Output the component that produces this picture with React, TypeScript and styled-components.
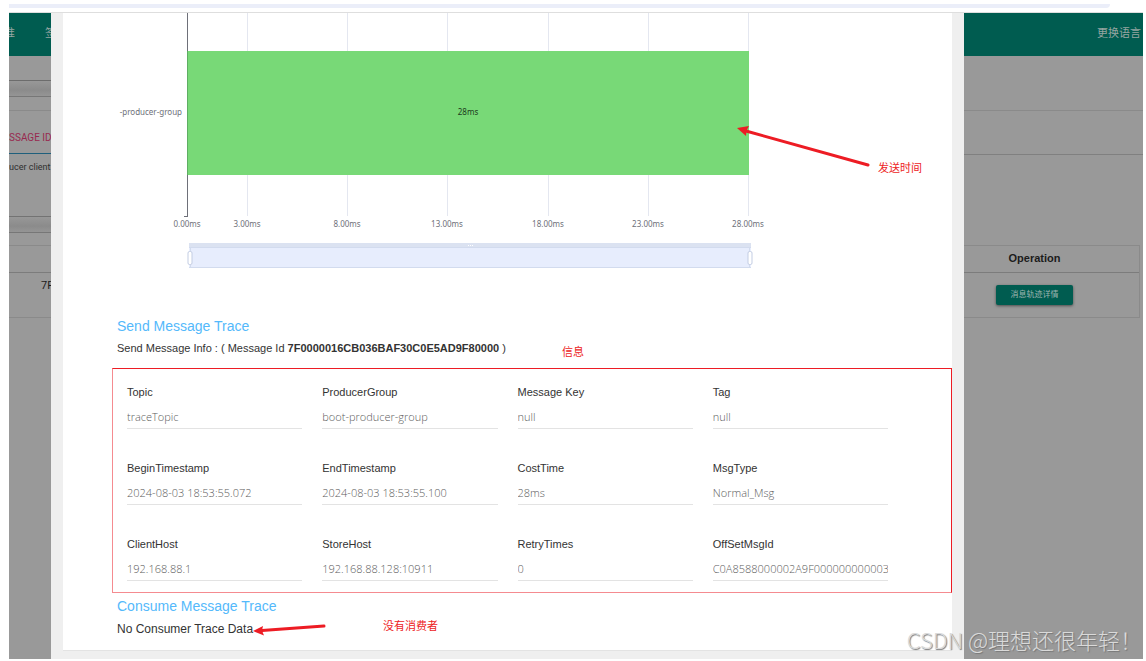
import React from 'react';
import styled, { createGlobalStyle } from 'styled-components';

const sans = '"Liberation Sans", "Noto Sans CJK SC", sans-serif';
const humanist = '"Open Sans", "Noto Sans CJK SC", sans-serif';
const material = 'Roboto, "Noto Sans CJK SC", sans-serif';
const red = '#ed1c24';

const GlobalStyle = createGlobalStyle`
  * { box-sizing: border-box; }
  body { margin: 0; background: #fff; font-family: ${sans}; color: #333; }
  h2, p { margin: 0; }
`;

const Page = styled.div`
  position: relative;
  padding: 4px 3px 2px 9px;
  overflow: hidden;
`;

const AddressBar = styled.div`
  height: 4px;
  margin-right: 33px;
  background: #ebeef9;
  border-bottom-right-radius: 4px;
`;

const Window = styled.div`
  display: grid;
  grid-template-columns: 42px minmax(0, 1fr) 179px;
  margin-top: 4px;
  border-top: 1px solid #dedede;
`;

const Backdrop = styled.div`
  background: #999;
  overflow: hidden;
  white-space: nowrap;
  font-family: ${material};
  font-size: 10px;
  color: #2f2f2f;
`;

const Header = styled.header<{ $end?: boolean }>`
  display: flex;
  align-items: center;
  justify-content: ${(p) => (p.$end ? 'flex-end' : 'space-between')};
  height: 43px;
  padding-right: ${(p) => (p.$end ? '2px' : '0')};
  padding-bottom: 2px;
  background: #005c50;
  color: #95a5a1;
  font-size: 11px;
  line-height: 16px;
`;

const HeaderClip = styled.span<{ $width: number; $fromEnd?: boolean }>`
  display: flex;
  justify-content: ${(p) => (p.$fromEnd ? 'flex-end' : 'flex-start')};
  width: ${(p) => p.$width}px;
  overflow: hidden;
`;

const Space = styled.div<{ $height: number; $line?: string }>`
  height: ${(p) => p.$height}px;
  border-bottom: 1px solid ${(p) => p.$line ?? 'transparent'};
`;

const ShadowBand = styled.div`
  height: 16px;
  border-bottom: 1px solid #777;
  background: linear-gradient(#989898, #8b8b8b 60%, #959595);
`;

const Tab = styled.div`
  display: flex;
  align-items: center;
  height: 43px;
  padding-top: 12px;
  border-bottom: 1px solid #1f5f7c;
  color: #98294f;
  line-height: 16px;
`;

const Hint = styled.div`
  height: 63px;
  padding-top: 5px;
  border-bottom: 1px solid #737373;
  font-size: 9px;
  line-height: 16px;
`;

const IdCell = styled.div`
  height: 45px;
  padding: 5px 0 0 32px;
  border-bottom: 1px solid #8a8a8a;
  font-size: 11px;
  line-height: 16px;
  color: #1c1c1c;
`;

const ResultTable = styled.table`
  width: calc(100% - 3px);
  border-collapse: separate;
  border-spacing: 0;
  border: 1px solid #8a8a8a;
  border-left: 0;
  text-align: center;

  th, td { padding: 0 34px 0 0; }
  th {
    height: 27px;
    padding-bottom: 2px;
    border-bottom: 1px solid #7c7c7c;
    font-family: ${sans};
    font-size: 11px;
    color: #1c1c1c;
  }
  td { height: 44px; }
`;

const DetailButton = styled.button`
  display: block;
  width: 77px;
  height: 20px;
  margin: 0 auto;
  padding: 0;
  border: 0;
  border-radius: 2px;
  background: #005c50;
  box-shadow: 0 1px 3px rgba(0, 0, 0, 0.5);
  color: #9fb5b1;
  font-family: ${sans};
  font-size: 8px;
  line-height: 20px;
`;

const Modal = styled.main`
  padding: 0 12px 8px;
  background: #efefef;
`;

const Panel = styled.section`
  position: relative;
  padding-bottom: 11px;
  background: #fff;
  border-bottom: 1px solid #e3e3e3;
`;

const Chart = styled.svg`
  display: block;
  width: 100%;
  height: 303px;
  font-family: "Noto Sans", sans-serif;
  font-size: 8px;
`;

const Title = styled.h2`
  padding-left: 54px;
  color: #54b9fb;
  font-size: 14px;
  font-weight: 400;
  line-height: 20px;
`;

const Info = styled.p`
  padding: 2px 0 0 54px;
  font-size: 11px;
  line-height: 20px;
`;

const Empty = styled.p`
  padding: 3px 0 0 54px;
  font-size: 12px;
  line-height: 20px;
`;

const FieldBox = styled.form`
  display: grid;
  grid-template-columns: repeat(4, minmax(0, 1fr));
  gap: 29px 20px;
  margin: 10px 0 3px 49px;
  padding: 13px 63px 11px 14px;
  border: 1px solid ${red};
  border-left-color: #f58b90;
  border-bottom-color: #f58b90;
`;

const Field = styled.div`
  display: flex;
  flex-direction: column;
`;

const Label = styled.label`
  font-size: 11px;
  line-height: 20px;
`;

const Value = styled.input`
  width: 100%;
  height: 27px;
  padding: 3px 0 0;
  border: 0;
  border-bottom: 1px solid #e3e3e3;
  border-radius: 0;
  outline: 0;
  background: transparent;
  color: #5c5c5c;
  font-family: ${humanist};
  font-size: 11px;
  font-weight: 300;
`;

const Marks = styled.svg`
  position: absolute;
  inset: 0;
  width: 100%;
  height: 100%;
  pointer-events: none;
  font-family: ${sans};
  font-size: 11px;
`;

const Watermark = styled.div`
  position: absolute;
  right: 4px;
  bottom: 6px;
  color: #dadada;
  font-family: "Noto Sans CJK SC", sans-serif;
  font-size: 22px;
  font-weight: 300;
  line-height: 32px;
  text-shadow: 1px 1px 1px #777;
  white-space: nowrap;
`;

const ticks: [number, string][] = [
  [124, '0.00ms'],
  [184, '3.00ms'],
  [284, '8.00ms'],
  [384, '13.00ms'],
  [485, '18.00ms'],
  [585, '23.00ms'],
  [685, '28.00ms'],
];

const fields: [string, string, string][] = [
  ['topic', 'Topic', 'traceTopic'],
  ['group', 'ProducerGroup', 'boot-producer-group'],
  ['key', 'Message Key', 'null'],
  ['tag', 'Tag', 'null'],
  ['begin', 'BeginTimestamp', '2024-08-03 18:53:55.072'],
  ['end', 'EndTimestamp', '2024-08-03 18:53:55.100'],
  ['cost', 'CostTime', '28ms'],
  ['type', 'MsgType', 'Normal_Msg'],
  ['client', 'ClientHost', '192.168.88.1'],
  ['store', 'StoreHost', '192.168.88.128:10911'],
  ['retry', 'RetryTimes', '0'],
  ['offset', 'OffSetMsgId', 'C0A8588000002A9F0000000000031B2C'],
];

function TraceChart() {
  return (
    <Chart role="img" aria-label="Message trace timeline">
      {ticks.slice(1).map(([x]) => (
        <rect key={x} x={x} y={0} width={1} height={203} fill="#e4e7f0" />
      ))}
      <rect x={124} y={0} width={1} height={204} fill="#6e7079" />
      <rect x={121} y={203} width={4} height={1} fill="#6e7079" />
      <rect x={125} y={38} width={561} height={124} fill="#78d977" />
      <rect x={124} y={38} width={1} height={124} fill="#5fae63" />
      <text x={119} y={102} textAnchor="end" fill="#6e7079">-producer-group</text>
      <text x={405} y={102} textAnchor="middle" fill="#1c3b1c">28ms</text>
      {ticks.map(([x, text]) => (
        <text key={text} x={x} y={214} textAnchor="middle" fill="#6e7079">{text}</text>
      ))}
      <rect x={126} y={230} width={562} height={5} fill="#dbe2f1" />
      <rect x={126} y={234} width={562} height={21} fill="#e7edfd" />
      <path d="M126 234.5H688M126 254.5H688M127.500 234V255M686.500 234V255" stroke="#d2dbee" fill="none" />
      <path d="M405 232.500h1m1 0h1m1 0h1" stroke="#fff" fill="none" />
      <rect x={125} y={238.5} width={4} height={13} rx={1.5} fill="#fff" stroke="#c3cde3" />
      <rect x={685} y={238.5} width={4} height={13} rx={1.5} fill="#fff" stroke="#c3cde3" />
    </Chart>
  );
}

function Annotations() {
  return (
    <Marks aria-hidden="true">
      <g stroke={red} fill="none" strokeLinecap="round">
        <path d="M683 118L805 152" strokeWidth={3} />
        <path d="M199 617.500L261 613" strokeWidth={3} />
      </g>
      <path d="M674 115L686 113L683.500 117.500L683 123Z" fill={red} />
      <path d="M190 618L200 613L199 617.500L201 622.500Z" fill={red} />
      <g fill={red}>
        <text x={815} y={159}>发送时间</text>
        <text x={499} y={343}>信息</text>
        <text x={320} y={617}>没有消费者</text>
      </g>
    </Marks>
  );
}

export default function App() {
  return (
    <>
      <GlobalStyle />
      <Page>
        <AddressBar />
        <Window>
          <Backdrop>
            <Header>
              <HeaderClip $width={6} $fromEnd>准</HeaderClip>
              <HeaderClip $width={6}>签</HeaderClip>
            </Header>
            <Space $height={25} $line="#6c6c6c" />
            <ShadowBand />
            <Space $height={14} $line="#8a8a8a" />
            <Tab>SSAGE ID</Tab>
            <Hint>ucer client</Hint>
            <ShadowBand />
            <Space $height={13} $line="#8a8a8a" />
            <Space $height={27} $line="#7c7c7c" />
            <IdCell>7F</IdCell>
          </Backdrop>
          <Modal>
            <Panel>
              <TraceChart />
              <Title>Send Message Trace</Title>
              <Info>
                Send Message Info : ( Message Id <b>7F0000016CB036BAF30C0E5AD9F80000</b> )
              </Info>
              <FieldBox>
                {fields.map(([id, label, value]) => (
                  <Field key={id}>
                    <Label htmlFor={id}>{label}</Label>
                    <Value id={id} value={value} readOnly />
                  </Field>
                ))}
              </FieldBox>
              <Title>Consume Message Trace</Title>
              <Empty>No Consumer Trace Data</Empty>
              <Annotations />
            </Panel>
          </Modal>
          <Backdrop>
            <Header $end>更换语言</Header>
            <Space $height={55} $line="#8a8a8a" />
            <Space $height={44} $line="#808080" />
            <Space $height={90} />
            <ResultTable>
              <thead>
                <tr><th scope="col">Operation</th></tr>
              </thead>
              <tbody>
                <tr><td><DetailButton type="button">消息轨迹详情</DetailButton></td></tr>
              </tbody>
            </ResultTable>
          </Backdrop>
        </Window>
        <Watermark>CSDN @理想还很年轻！</Watermark>
      </Page>
    </>
  );
}
